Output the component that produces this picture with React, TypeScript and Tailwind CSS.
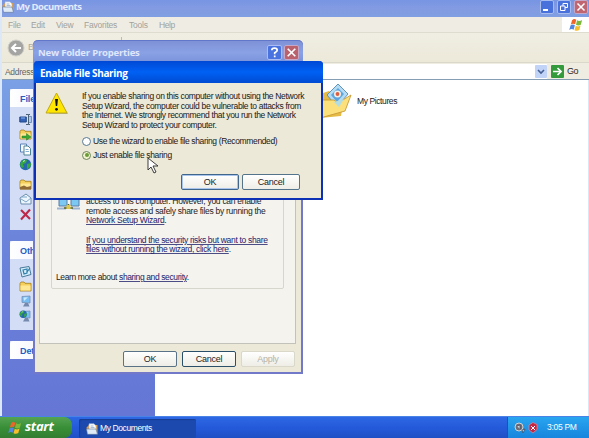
import type { ReactNode } from "react";

const FlagIcon = ({ className }: { className: string }) => (
  <svg className={className} viewBox="0 0 16 16">
    <path d="M3.5 2.5Q6-.2 8.3 2L7 7.2Q4.500 5.500 2 7.600Z" fill="#ee6429" />
    <path d="M9.200 2.700Q12 4.300 15 2.300L13.500 7.600Q10.500 9.300 8 7.600Z" fill="#7db83a" />
    <path d="M1.700 8.600Q4.300 6.500 6.700 8.200L5.300 13.400Q3 11.700.3 13.600Z" fill="#5286e0" />
    <path d="M7.700 8.800Q10.500 10.400 13.200 8.700L11.800 13.800Q9 15.500 6.300 13.900Z" fill="#f7bf2d" />
  </svg>
);

const DocsIcon = ({ className }: { className: string }) => (
  <svg className={className} viewBox="0 0 12 12">
    <path d="M.5 4.500 3 2h8.500v9H1.500Z" fill="#e39a3c" />
    <path d="M3 .8h5l2 2v6H3Z" fill="#fff" stroke="#9db1ca" strokeWidth=".6" />
    <path d="M4.500 3h3M4.500 4.600h4" stroke="#7d98bd" strokeWidth=".7" />
    <path d="M.5 6h9.500l1.500 5.300H1.500Z" fill="#dfeaf7" stroke="#5d7396" strokeWidth=".6" />
  </svg>
);

const Folder = () => (
  <>
    <path d="M1 3.500 2 2h3l1 1.300h6V11H1Z" fill="#f5cf5b" stroke="#a57d1c" strokeWidth=".8" />
    <path d="M1.500 5.500h10V10.500h-10Z" fill="#fde795" />
  </>
);
const Globe = () => (
  <>
    <circle cx="6.500" cy="6.500" r="5.700" fill="#2568ae" />
    <path d="M2 4Q5 0 8 2L7 5 4 6 5 9 3 10Q0 7 2 4M8 6l4-1Q12 10 8 11Z" fill="#36a83e" />
    <path d="M4 3.500 6 2.500" stroke="#c9f2d5" />
  </>
);
const Monitor = () => (
  <>
    <path d="M3 1.500 11 1v7l-8-.6Z" fill="#75bdf3" stroke="#7790b4" strokeWidth=".8" />
    <path d="M4.500 2.500 9 2.300 5 6Z" fill="#c9ebff" />
    <path d="M6 8h3l1.500 3.500H4Z" fill="#7489ad" />
  </>
);
const icons: Record<string, ReactNode> = {
  rename: (
    <>
      <path d="M.8 4h6.500v5H.8Z" fill="#3462b8" stroke="#234987" />
      <path d="M2 5h4" stroke="#8bb5f5" />
      <path d="M7 1.500h2.500v10H7M9.500 1.500h1.500M9.500 11.500h1.500" fill="none" stroke="#496077" />
      <path d="M10.200 3.500h2.300v6h-2.300" fill="#acc7f0" stroke="#6280ae" strokeWidth=".8" />
    </>
  ),
  move: (
    <>
      <Folder />
      <path d="M3 8h4.500V5.500L12 9l-4.500 3.200V10H3Z" fill="#39a936" stroke="#25791e" strokeWidth=".5" />
    </>
  ),
  copy: (
    <>
      <path d="M1.500 1h6v8h-6Z" fill="#f5f9ff" stroke="#5b83b6" />
      <path d="M5 3h4l2.500 2.500V12H5Z" fill="#fff" stroke="#4c8393" />
      <path d="M6.500 6.500h3M6.500 8.500h3.500" stroke="#85b0d5" />
    </>
  ),
  globe: <Globe />,
  share: (
    <>
      <Folder />
      <path d="m1 9 4-1.500 3 1.500 4-1v3.500H1Z" fill="#8f6a35" />
    </>
  ),
  mail: (
    <>
      <path d="m1 5 6-4 5 4v6H2Z" fill="#edf6ff" stroke="#6c8dab" />
      <path d="m2 6 5 3 5-4M3 4h5" fill="none" stroke="#7fa7c8" />
    </>
  ),
  remove: <path d="m2 2 9 9M11 1.500 2 11.500" fill="none" stroke="#bd2948" strokeWidth="2.100" />,
  desktop: (
    <>
      <path d="M1 3 10 1.500l2 8L3 12Z" fill="#d4ecfb" stroke="#477b9b" />
      <path d="m4 5 4-1v4l-3 1Zm4 2 3-4" fill="none" stroke="#2e7fa9" strokeWidth="1.200" />
    </>
  ),
  folder: <Folder />,
  monitor: <Monitor />,
  network: (
    <>
      <Monitor />
      <g transform="translate(0 0) scale(.65)">
        <Globe />
      </g>
    </>
  ),
};

const Icon = ({ name }: { name: string }) => (
  <svg className="block size-[13px]" viewBox="0 0 13 13">
    {icons[name]}
  </svg>
);

const TaskPanel = ({ title, names, className }: { title: string; names: string[]; className: string }) => (
  <section className={`ml-[8px] w-[134px] shrink-0 bg-[#d3ddf6] ${className}`}>
    <h2 className="h-[18px] w-[134px] rounded-tl-[3px] bg-linear-to-r from-white to-[#c6d3f7] pl-[10px] text-[9px] leading-[20px] font-bold tracking-[-0.1px] text-[#265bc2]">
      {title}
    </h2>
    <div className="flex flex-col gap-[2px] pt-[6px] pl-[9px]">
      {names.map((n, i) => (
        <div key={i} className={n === "share" ? "mt-[5px]" : ""}>
          <Icon name={n} />
        </div>
      ))}
    </div>
  </section>
);

const Button = ({ children, className }: { children: ReactNode; className: string }) => (
  <button
    className={`flex items-center justify-center rounded-[2px] border bg-linear-to-b from-white to-[#eeede6] text-[9px] leading-none tracking-[-0.25px] ${className}`}
  >
    {children}
  </button>
);

const Link = ({ children }: { children: ReactNode }) => (
  <a className="text-[#22226c] underline decoration-[#4b4b85] decoration-1 underline-offset-1">{children}</a>
);

const Explorer = () => (
  <div className="flex h-[416px] flex-col border-l-2 border-[#dce8f7] bg-white">
    <header className="flex h-[17px] shrink-0 items-start bg-linear-to-b from-[#7795e2] via-[#839be2] to-[#7f9fe2] pr-[1px]">
      <DocsIcon className="mt-px h-[12px] w-[12px]" />
      <span className="ml-[2px] font-['Open_Sans',sans-serif] text-[9.5px] leading-[14px] font-bold tracking-[-0.45px] text-[#e3ebfc]">My Documents</span>
      <div className="ml-auto flex gap-[3px]">
        <svg className="h-[14px] w-[14px] rounded-[2px] border border-[#a6bbee] bg-[#4971db]" viewBox="0 0 12 12">
          <path d="M2 9h5" stroke="white" strokeWidth="2" />
        </svg>
        <svg className="h-[14px] w-[14px] rounded-[2px] border border-[#a6bbee] bg-[#4971db]" viewBox="0 0 12 12">
          <path d="M5 5V2.500h4.500v4H7M2.500 5h4.500v4.500H2.500Z" fill="none" stroke="white" />
        </svg>
        <svg className="h-[14px] w-[14px] rounded-[2px] border border-[#c6a7c5] bg-[#bf6670]" viewBox="0 0 12 12">
          <path d="m2.500 2.500 7 7m0-7-7 7" stroke="white" strokeWidth="1.500" />
        </svg>
      </div>
    </header>
    <nav className="flex h-[16px] shrink-0 border-b border-[#dedbcf] bg-[#efede3] pl-[6px] text-[8.5px] leading-[16px] tracking-[-0.2px] text-[#a2a19b]">
      <span className="w-[23px]">File</span>
      <span className="w-[25px]">Edit</span>
      <span className="w-[28px]">View</span>
      <span className="w-[45px]">Favorites</span>
      <span className="w-[30px]">Tools</span>
      <span className="tracking-[-0.4px]">Help</span>
      <div className="ml-auto flex w-[27px] items-center justify-center bg-white">
        <FlagIcon className="h-[14px] w-[14px]" />
      </div>
    </nav>
    <div className="flex h-[30px] shrink-0 items-center border-b border-[#dad8cb] bg-linear-to-b from-[#f0eee3] to-[#ece9d9] pl-[5px]">
      <svg className="h-[18px] w-[18px]" viewBox="0 0 18 18">
        <circle cx="9" cy="9" r="8" fill="#a4a4a3" stroke="#d1d0c8" />
        <path d="M14 9H5m4-4L5 9l4 4" fill="none" stroke="white" strokeWidth="2" />
      </svg>
      <span className="ml-[3px] w-[93px] text-[9px] text-[#aaa9a2]">Back</span>
      <span className="mb-[17px] h-[5px] w-px bg-[#bdbbb0]" />
    </div>
    <div className="flex h-[17px] shrink-0 items-center border-b border-[#859eb3] bg-[#efede2] pl-[3px] text-[9px] tracking-[-0.2px] text-[#656563]">
      <span className="mt-[2px] w-[34px] text-[8.5px] tracking-[-0.3px]">Address</span>
      <div className="flex h-[15px] flex-1 justify-end bg-white">
        <svg className="mt-px h-[13px] w-[12px] rounded-[1px] bg-[#c2d3f8]" viewBox="0 0 12 13">
          <path d="m3 5 3 3 3-3" fill="none" stroke="#445f93" strokeWidth="1.600" />
        </svg>
      </div>
      <svg className="ml-[4px] h-[13px] w-[13px] rounded-[1px] bg-[#349b3d]" viewBox="0 0 13 13">
        <path d="M2 6.500h8M6.500 3 10 6.500 6.500 10" fill="none" stroke="white" strokeWidth="1.700" />
      </svg>
      <span className="mt-[2px] ml-[3px] w-[22px] tracking-[-0.6px] text-[#292929]">Go</span>
    </div>
    <main className="flex min-h-0 flex-1 border-r border-[#dbe6f5]">
      <aside className="flex w-[153px] shrink-0 flex-col overflow-hidden bg-linear-to-b from-[#7ba0e5] via-[#6b83da] to-[#6576d5]">
        <TaskPanel
          title="File and Folder Tasks"
          className="mt-[9px] h-[141px]"
          names={["rename", "move", "copy", "globe", "share", "mail", "remove"]}
        />
        <TaskPanel title="Other Places" className="mt-[11px] h-[89px]" names={["desktop", "folder", "monitor", "network"]} />
        <TaskPanel title="Details" className="mt-[11px] h-[18px]" names={[]} />
      </aside>
      <div className="flex h-[42px] items-center pl-[162px]">
        <svg className="h-[36px] w-[36px] shrink-0" viewBox="0 0 36 36">
          <path d="M3 11 12 8l4 3 12-1-4 23-21 2Z" fill="#e5bb46" />
          <path d="m10 12 11-11 10 10-11 13Z" fill="#b5dbf2" stroke="#5f94bd" />
          <path d="m14 12 7-7 6 6-7 8Z" fill="#5ca6df" />
          <circle cx="20.500" cy="11" r="3.500" fill="#f3eee6" />
          <circle cx="20.500" cy="11" r="1.900" fill="#d95f42" />
          <path d="m3 17 14 0 4 3 13-8-6 16L3 35Z" fill="#fbe07c" stroke="#c99b35" strokeWidth=".9" />
          <path d="m17 19 10-3-5 8Z" fill="#b2dde5" />
        </svg>
        <span className="mt-px ml-[4px] text-[8.5px] tracking-[-0.4px] whitespace-nowrap text-[#171717]">My Pictures</span>
      </div>
    </main>
  </div>
);

const PropertiesWindow = () => (
  <section className="absolute top-[40px] left-[33px] flex h-[334px] w-[270px] flex-col rounded-t-[5px] border-2 border-t-0 border-[#7279c9] bg-[#ece9d8] px-[4px]">
    <header className="-mx-[6px] flex h-[24px] shrink-0 items-center rounded-t-[5px] border-t border-[#6177c9] bg-linear-to-b from-[#7e91d7] via-[#8aa1e5] to-[#7890d8] pr-[4px] pl-[5px]">
      <span className="font-['Open_Sans',sans-serif] text-[9.5px] leading-none font-bold tracking-[-0.2px] text-[#dfe7fc]">New Folder Properties</span>
      <div className="ml-auto flex gap-[2px]">
        <svg className="size-[15px] rounded-[2px] border border-[#a9bcf4] bg-[#4a73df]" viewBox="0 0 12 12">
          <path d="M3.500 4Q3.500 2 6 2t2.500 2Q8.500 5.200 6.200 6.200v1.300M6.200 8.700v1.700" fill="none" stroke="white" strokeWidth="1.600" />
        </svg>
        <svg className="size-[15px] rounded-[2px] border border-[#c6a7c5] bg-[#b9616d]" viewBox="0 0 12 12">
          <path d="m2.500 2.500 7 7m0-7-7 7" stroke="white" strokeWidth="1.500" />
        </svg>
      </div>
    </header>
    <div className="h-[280px] w-[257px] border border-t-0 border-[#c3c2ba] bg-[#f4f3ee] pl-[11px]">
      <div className="h-[225px] w-[233px] rounded-[2px] border border-[#d7d6cd] pl-[4px] text-[8.5px] leading-[9.6px] text-[#1c1c1c]">
        <div className="flex pt-[132px]">
          <svg className="mt-[-2px] h-[17px] w-[25px] shrink-0" viewBox="0 0 25 17">
            <path d="M3 2h8v9H3ZM15 2h8v9h-8Z" fill="#7bc9f3" stroke="#587ba7" />
            <path d="M1 12.500h9v2H1ZM16 12.500h8v2h-8Z" fill="#9db3d0" />
            <path d="M8 13h9M12.500 9v5" stroke="#55602b" strokeWidth="1.500" />
            <path d="M10.500 10h4v4h-4Z" fill="#dfc847" />
          </svg>
          <div className="ml-[5px] whitespace-nowrap">
            <p className="tracking-[-0.29px]">access to this computer. However, you can enable</p>
            <p className="tracking-[-0.28px]">remote access and safely share files by running the</p>
            <p className="tracking-[-0.31px]"><Link>Network Setup Wizard</Link>.</p>
            <p className="mt-[10px] tracking-[-0.32px]"><Link>If you understand the security risks but want to share</Link></p>
            <p className="tracking-[-0.32px]"><Link>files without running the wizard, click here</Link>.</p>
          </div>
        </div>
        <p className="mt-[18px] tracking-[-0.38px] whitespace-nowrap">Learn more about <Link>sharing and security</Link>.</p>
      </div>
    </div>
    <footer className="mt-[7px] flex justify-end gap-[5px] pr-[2px]">
      <Button className="h-[16px] w-[54px] border-[#5a7285] text-[#242424]">OK</Button>
      <Button className="h-[16px] w-[54px] border-[#294f69] text-[#242424]">Cancel</Button>
      <Button className="h-[16px] w-[54px] border-[#dad8c9] text-[#b5b3a6]">Apply</Button>
    </footer>
  </section>
);

const SharingDialog = () => (
  <section className="absolute top-[61px] left-[34px] flex h-[139px] w-[289px] flex-col rounded-t-[4px] border-2 border-t-0 border-[#0c31b5] bg-[#ece9d8]">
    <header className="-mx-[2px] h-[22px] shrink-0 rounded-t-[4px] bg-linear-to-b from-[#0048d5] via-[#0061f4] to-[#004bd3] pl-[6px] font-['Open_Sans',sans-serif] text-[10px] leading-[25px] font-bold tracking-[-0.35px] text-white">
      Enable File Sharing
    </header>
    <div className="flex pt-[9px] pl-[9px]">
      <svg className="h-[24px] w-[24px] shrink-0" viewBox="0 0 24 24">
        <path d="M12 3 23 22H4Z" fill="#8c8b82" opacity=".6" />
        <path d="M11.500 1 22 21H1Z" fill="#fee600" stroke="#c0a91b" strokeLinejoin="round" />
        <path d="M10 7h3l-.8 7h-1.400Z" fill="#111" />
        <circle cx="11.500" cy="17.300" r="1.400" fill="#111" />
      </svg>
      <div className="ml-[13px] text-[8.5px] leading-[9.6px] whitespace-nowrap text-[#181818]">
        <p className="tracking-[-0.34px]">If you enable sharing on this computer without using the Network</p>
        <p className="tracking-[-0.33px]">Setup Wizard, the computer could be vulnerable to attacks from</p>
        <p className="tracking-[-0.35px]">the Internet. We strongly recommend that you run the Network</p>
        <p className="tracking-[-0.34px]">Setup Wizard to protect your computer.</p>
        <label className="mt-[4px] flex h-[14px] items-center gap-[2px] tracking-[-0.36px]">
          <span className="size-[9px] rounded-full border border-[#577994] bg-white" />
          Use the wizard to enable file sharing (Recommended)
        </label>
        <label className="flex h-[14px] items-center gap-[2px] tracking-[-0.34px]">
          <span className="flex size-[9px] items-center justify-center rounded-full border border-[#6d8460] bg-[#f0f3cc]">
            <span className="size-[4px] rounded-full bg-[#6a9c39]" />
          </span>
          Just enable file sharing
        </label>
      </div>
    </div>
    <footer className="mt-auto flex justify-end gap-[3px] pr-[21px] pb-[8px]">
      <Button className="h-[16px] w-[58px] border-[#40668c] text-[#222] shadow-[inset_0_0_0_1px_#a9c4ed]">OK</Button>
      <Button className="h-[16px] w-[58px] border-[#53748b] text-[#222]">Cancel</Button>
    </footer>
  </section>
);

const Taskbar = () => (
  <footer className="flex h-[22px] items-stretch border-t border-[#4983e5] bg-linear-to-b from-[#2e68e3] via-[#245ada] to-[#204fc4] text-white">
    <div className="flex w-[72px] items-center rounded-r-[8px] bg-linear-to-b from-[#55a352] via-[#388f37] to-[#337d32] pl-[8px]">
      <FlagIcon className="h-[14px] w-[14px]" />
      <span className="mb-[2px] ml-[3px] font-['Open_Sans',sans-serif] text-[13px] leading-none font-bold tracking-[-0.3px] italic">start</span>
    </div>
    <div className="mt-[2px] ml-[7px] flex w-[117px] items-center rounded-[2px] bg-[#1c49ad] pl-[7px] shadow-[inset_1px_1px_1px_#173b91]">
      <DocsIcon className="h-[12px] w-[12px]" />
      <span className="ml-[2px] text-[8.5px] tracking-[-0.4px]">My Documents</span>
    </div>
    <div className="ml-auto flex w-[82px] items-center border-l border-[#1753b8] bg-linear-to-b from-[#29a5ef] to-[#1785dd] pl-[6px]">
      <svg className="h-[12px] w-[12px]" viewBox="0 0 12 12">
        <circle cx="5" cy="5" r="4" fill="#716d78" stroke="#d0d5d7" />
        <path d="m3 4 3-1v4M8 8l3-1-2 4Z" fill="#c8d8e1" stroke="#424659" strokeWidth=".7" />
      </svg>
      <svg className="ml-[2px] h-[12px] w-[10px]" viewBox="0 0 10 12">
        <path d="m5 .5 4 2v5L5 11 1 8V3Z" fill="#c32743" stroke="#e58698" strokeWidth=".7" />
        <path d="m3 4 4 4m0-4L3 8" stroke="white" />
      </svg>
      <span className="ml-[9px] text-[8.5px] tracking-[-0.3px] whitespace-nowrap">3:05 PM</span>
    </div>
  </footer>
);

export default function App() {
  return (
    <div className="relative h-[438px] w-[589px] overflow-hidden bg-[#dce8f7] font-['Liberation_Sans',Arial,sans-serif]">
      <Explorer />
      <Taskbar />
      <PropertiesWindow />
      <SharingDialog />
      <svg className="absolute top-[157px] left-[147px] h-[17px] w-[12px]" viewBox="0 0 12 17">
        <path d="M1 1v12l3-3 3 6 2-1-3-6h5Z" fill="white" stroke="#292929" strokeWidth=".9" />
      </svg>
    </div>
  );
}
